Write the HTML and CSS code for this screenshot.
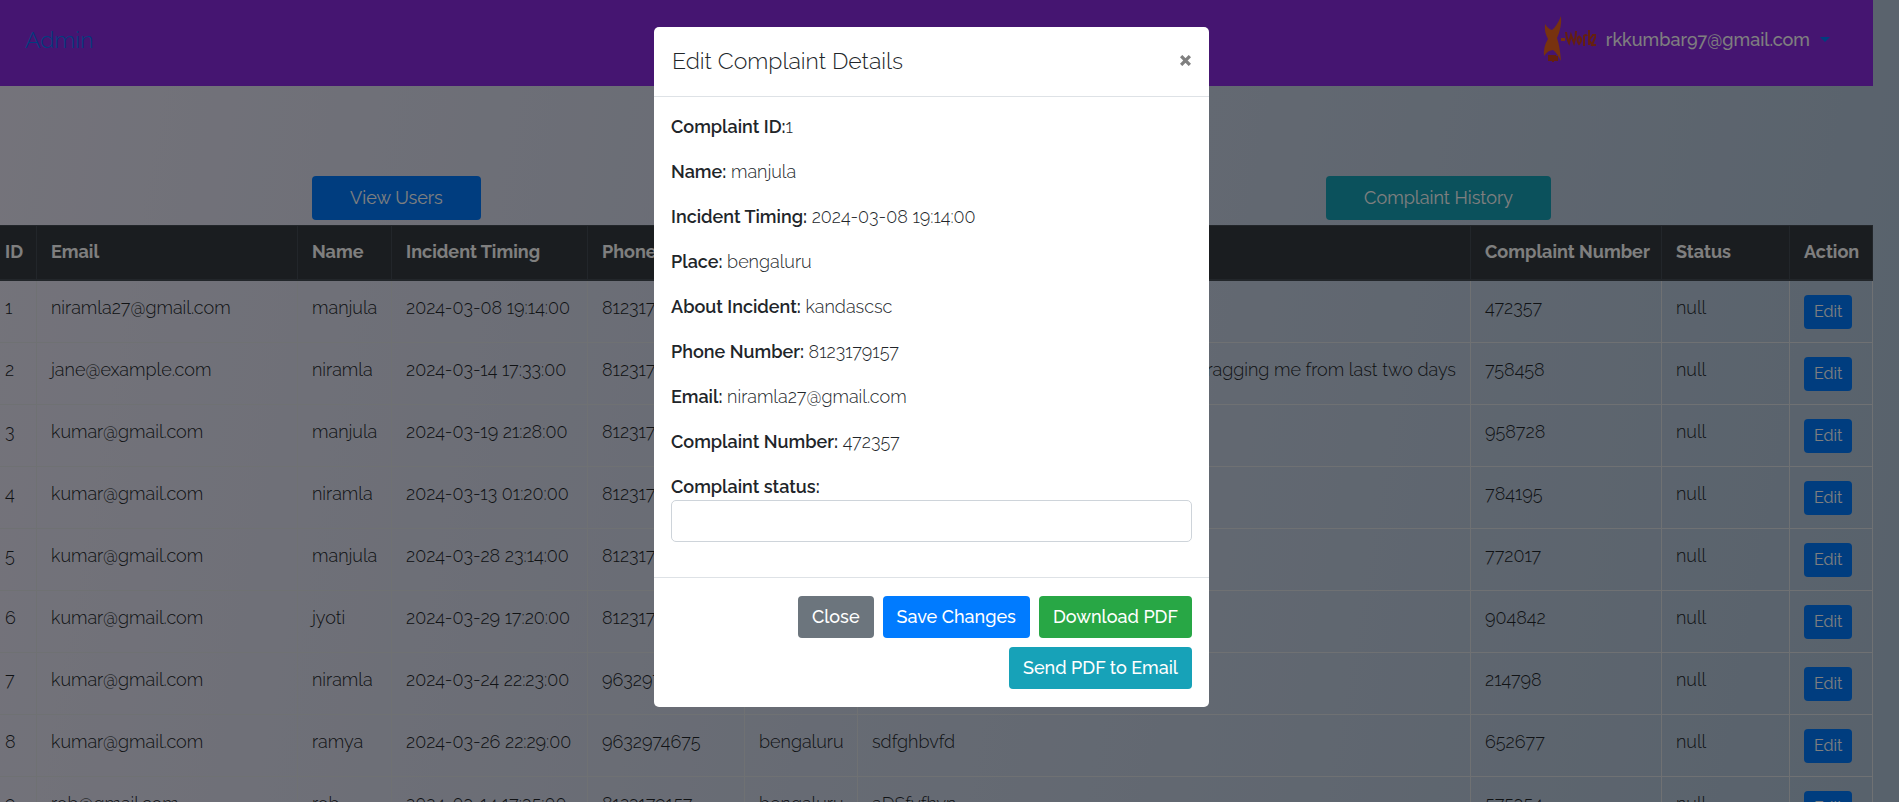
FILE: index.html
```html
<!DOCTYPE html>
<html lang="en">
<head>
<meta charset="utf-8">
<title>Admin</title>
<link rel="stylesheet" href="styles.css">
</head>
<body>
<div class="page">
  <header class="navbar">
    <a class="brand" href="#">Admin</a>
    <div class="account">
      <svg class="logo" viewBox="0 0 54 48" role="img" aria-label="X-workz">
        <path fill="#f0641c" d="M3 9 Q6 14 10 15 Q15 11 19 1 Q20 12 15 23 Q18 32 19 46 Q15 38 11 35 Q6 35 2 41 Q1 32 6 24 Q2 17 3 9Z"/>
        <path fill="#f0641c" d="M19 23h4v3h-4z"/>
        <path fill="none" stroke="#c8401c" stroke-width="2" d="M24 17q0 5 3 11l2-8 3 8q2-6 2-12M37 21q-3 4 0 8 4-4 0-8M42 31v-10q2-2 3 0M47 15v15M51 20l-4 5 4 6M50 20h4l-4 10h4"/>
        <path fill="none" stroke="#c8401c" stroke-width="2" d="M7 41v4h2v-4zM11 47v-6h2v4h-2M15 41v5"/>
      </svg>
      <span class="user">rkkumbar97@gmail.com</span>
      <a class="caret" href="#" aria-label="Account menu"></a>
    </div>
  </header>
  <div class="actions">
    <button class="btn primary wide">View Users</button>
    <button class="btn info wide">Complaint History</button>
  </div>
  <table class="complaints">
    <colgroup><col class="c-id"><col class="c-email"><col class="c-name"><col class="c-time"><col class="c-phone"><col class="c-place"><col class="c-about"><col class="c-number"><col class="c-status"><col class="c-action"></colgroup>
    <thead><tr><th>ID</th><th>Email</th><th>Name</th><th>Incident Timing</th><th>Phone</th><th>Place</th><th>About</th><th>Complaint Number</th><th>Status</th><th>Action</th></tr></thead>
    <tbody>
      <tr><td>1</td><td>niramla27@gmail.com</td><td>manjula</td><td>2024-03-08 19:14:00</td><td>8123179157</td><td>bengaluru</td><td>kandascsc</td><td>472357</td><td>null</td><td><button class="btn primary small">Edit</button></td></tr>
      <tr><td>2</td><td>jane@example.com</td><td>niramla</td><td>2024-03-14 17:33:00</td><td>8123179157</td><td>bengaluru</td><td class="end">ragging me from last two days</td><td>758458</td><td>null</td><td><button class="btn primary small">Edit</button></td></tr>
      <tr><td>3</td><td>kumar@gmail.com</td><td>manjula</td><td>2024-03-19 21:28:00</td><td>8123179157</td><td>bengaluru</td><td></td><td>958728</td><td>null</td><td><button class="btn primary small">Edit</button></td></tr>
      <tr><td>4</td><td>kumar@gmail.com</td><td>niramla</td><td>2024-03-13 01:20:00</td><td>8123179157</td><td>bengaluru</td><td></td><td>784195</td><td>null</td><td><button class="btn primary small">Edit</button></td></tr>
      <tr><td>5</td><td>kumar@gmail.com</td><td>manjula</td><td>2024-03-28 23:14:00</td><td>8123179157</td><td>bengaluru</td><td></td><td>772017</td><td>null</td><td><button class="btn primary small">Edit</button></td></tr>
      <tr><td>6</td><td>kumar@gmail.com</td><td>jyoti</td><td>2024-03-29 17:20:00</td><td>8123179157</td><td>bengaluru</td><td></td><td>904842</td><td>null</td><td><button class="btn primary small">Edit</button></td></tr>
      <tr><td>7</td><td>kumar@gmail.com</td><td>niramla</td><td>2024-03-24 22:23:00</td><td>9632974675</td><td>bengaluru</td><td></td><td>214798</td><td>null</td><td><button class="btn primary small">Edit</button></td></tr>
      <tr><td>8</td><td>kumar@gmail.com</td><td>ramya</td><td>2024-03-26 22:29:00</td><td>9632974675</td><td>bengaluru</td><td>sdfghbvfd</td><td>652677</td><td>null</td><td><button class="btn primary small">Edit</button></td></tr>
      <tr><td>9</td><td>rob@gmail.com</td><td>rob</td><td>2024-03-14 17:35:00</td><td>8123179157</td><td>bengaluru</td><td>aDSfyfhvn</td><td>575354</td><td>null</td><td><button class="btn primary small">Edit</button></td></tr>
    </tbody>
  </table>
</div>
<div class="backdrop">
  <form class="modal" role="dialog" aria-labelledby="modal-title">
    <div class="modal-header">
      <h5 class="modal-title" id="modal-title">Edit Complaint Details</h5>
      <button class="close" type="button" aria-label="Close dialog"><svg class="close-icon" viewBox="0 0 10 10"><path d="M1 1l8 8M9 1l-8 8"/></svg></button>
    </div>
    <div class="modal-body">
      <p><strong>Complaint ID:</strong>1</p>
      <p><strong>Name:</strong> manjula</p>
      <p><strong>Incident Timing:</strong> 2024-03-08 19:14:00</p>
      <p><strong>Place:</strong> bengaluru</p>
      <p><strong>About Incident:</strong> kandascsc</p>
      <p><strong>Phone Number:</strong> 8123179157</p>
      <p><strong>Email:</strong> niramla27@gmail.com</p>
      <p><strong>Complaint Number:</strong> 472357</p>
      <label for="status">Complaint status:</label>
      <input class="field" id="status" type="text">
    </div>
    <div class="modal-footer">
      <button class="btn secondary" type="button">Close</button>
      <button class="btn primary" type="button">Save Changes</button>
      <button class="btn success" type="button">Download PDF</button>
      <button class="btn info" type="button">Send PDF to Email</button>
    </div>
  </form>
</div>
</body>
</html>
```
FILE: styles.css
```css
* { box-sizing: border-box; }
html { height: 100%; overflow: hidden; }
body {
  margin: 0;
  height: 100%;
  overflow: hidden;
  background: linear-gradient(100deg, #e9e7f6, #b0c4d8);
  color: #212529;
  font: 300 18px/27px Raleway, Lato, "Open Sans", sans-serif;
}
a { text-decoration: none; }
.page { margin-right: 26px; }
.navbar {
  display: flex;
  justify-content: space-between;
  height: 86px;
  padding: 0 43px 8px 25px;
  background: #8a2be2;
}
.brand { align-self: center; font-size: 23px; color: #007bff; }
.account { display: flex; align-items: center; gap: 10px; }
.logo { width: 54px; height: 48px; }
.user { font-weight: 500; color: #fff; }
.caret { border: 5px solid transparent; border-top-color: #007bff; border-bottom: 0; }
.actions {
  display: flex;
  justify-content: space-between;
  padding: 90px 322px 5px 312px;
}
.btn {
  padding: 7px 13px;
  border: 1px solid transparent;
  border-radius: 4px;
  color: #fff;
  font: inherit;
  font-weight: 500;
  line-height: 26px;
}
.wide { padding: 8px 37px; font-weight: 400; }
.small { padding: 3px 9px; font-size: 16px; font-weight: 400; }
.primary { background: #007bff; }
.info { background: #17a2b8; }
.secondary { background: #6c757d; }
.success { background: #28a745; }
.complaints {
  width: calc(100% + 10px);
  margin-left: -10px;
  border-collapse: collapse;
  table-layout: fixed;
  line-height: 25px;
}
.complaints th, .complaints td {
  padding: 13px 14px;
  border: 1px solid #dee2e6;
  text-align: left;
  vertical-align: top;
  white-space: nowrap;
}
.complaints th {
  padding-bottom: 15px;
  background: #343a40;
  border-color: #454d55;
  border-bottom-width: 2px;
  color: #fff;
  font-weight: 700;
}
.complaints td { padding-top: 14px; }
.complaints .end { text-align: right; }
.complaints .small { display: block; }
.c-id { width: 46px; }
.c-email { width: 261px; }
.c-name { width: 94px; }
.c-time { width: 196px; }
.c-phone { width: 157px; }
.c-place { width: 113px; }
.c-number { width: 191px; }
.c-status { width: 128px; }
.c-action { width: 83px; }
.backdrop {
  position: fixed;
  inset: 0;
  display: flex;
  justify-content: center;
  align-items: flex-start;
  padding: 27px 36px 0 0;
  background: rgba(0, 0, 0, 0.5);
}
.modal {
  width: 555px;
  border-radius: 5px;
  background: #fff;
}
.modal-header {
  display: flex;
  justify-content: space-between;
  padding: 16px 18px 18px;
  border-bottom: 1px solid #dee2e6;
}
.modal-title { margin: 0; font-size: 23px; line-height: 35px; font-weight: 300; }
.close { align-self: center; display: flex; padding: 0; border: 0; background: none; }
.close-icon { width: 11px; height: 11px; fill: none; stroke: #7f7f7f; stroke-width: 3; }
.modal-body { display: flex; flex-direction: column; padding: 16px 17px 35px; }
.modal-body p { margin: 0 0 18px; }
.modal-body strong, .modal-body label { font-weight: 600; }
.field {
  height: 42px;
  padding: 0 14px;
  border: 1px solid #ced4da;
  border-radius: 5px;
  font: inherit;
}
.modal-footer {
  display: flex;
  flex-wrap: wrap;
  justify-content: flex-end;
  gap: 9px;
  padding: 18px 17px;
  border-top: 1px solid #dee2e6;
}
```
